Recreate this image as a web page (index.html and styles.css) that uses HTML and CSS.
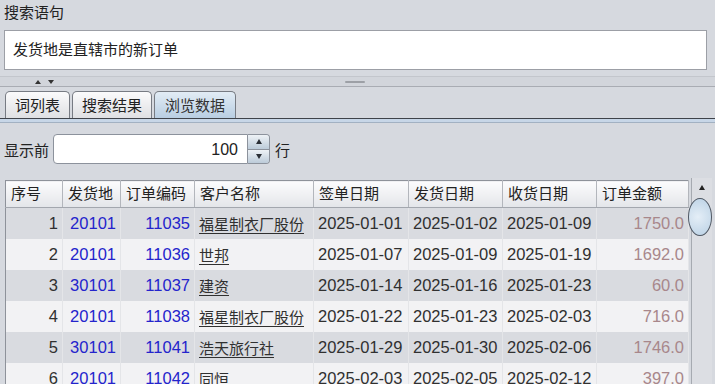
FILE: index.html
```html
<!DOCTYPE html>
<html lang="zh-CN">

<head>
    <meta charset="UTF-8">
    <meta name="viewport" content="width=device-width, initial-scale=1.0">
    <title>搜索</title>
    <link rel="stylesheet" href="styles.css">
</head>

<body>
    <div class="query-label">搜索语句</div>
    <div class="query-box">发货地是直辖市的新订单</div>

    <div class="splitter">
        <div class="splitter-bar">
            <span class="arrow-up"></span>
            <span class="arrow-down"></span>
            <span class="grip"></span>
        </div>
    </div>

    <div class="tabs">
        <div class="tab">词列表</div>
        <div class="tab">搜索结果</div>
        <div class="tab active">浏览数据</div>
    </div>
    <div class="tab-rule"></div>

    <div class="browse">
        <div class="limit-row">
            <span class="limit-label">显示前</span>
            <div class="spinner">
                <div class="spinner-field">100</div>
                <div class="spinner-btns">
                    <div class="spin-btn"><span class="tri-up"></span></div>
                    <div class="spin-btn"><span class="tri-down"></span></div>
                </div>
            </div>
            <span class="limit-label">行</span>
        </div>

        <div class="grid">
            <table class="data">
                <colgroup>
                    <col style="width:57px">
                    <col style="width:58px">
                    <col style="width:74px">
                    <col style="width:119px">
                    <col style="width:95px">
                    <col style="width:94px">
                    <col style="width:94px">
                    <col style="width:92px">
                </colgroup>
                <thead>
                    <tr>
                        <th>序号</th>
                        <th>发货地</th>
                        <th>订单编码</th>
                        <th>客户名称</th>
                        <th>签单日期</th>
                        <th>发货日期</th>
                        <th>收货日期</th>
                        <th>订单金额</th>
                    </tr>
                </thead>
                <tbody>
                    <tr>
                        <td class="num">1</td><td class="num link">20101</td><td class="num link">11035</td>
                        <td class="name"><u>福星制衣厂股份</u></td>
                        <td>2025-01-01</td><td>2025-01-02</td><td>2025-01-09</td><td class="num money">1750.0</td>
                    </tr>
                    <tr>
                        <td class="num">2</td><td class="num link">20101</td><td class="num link">11036</td>
                        <td class="name"><u>世邦</u></td>
                        <td>2025-01-07</td><td>2025-01-09</td><td>2025-01-19</td><td class="num money">1692.0</td>
                    </tr>
                    <tr>
                        <td class="num">3</td><td class="num link">30101</td><td class="num link">11037</td>
                        <td class="name"><u>建资</u></td>
                        <td>2025-01-14</td><td>2025-01-16</td><td>2025-01-23</td><td class="num money">60.0</td>
                    </tr>
                    <tr>
                        <td class="num">4</td><td class="num link">20101</td><td class="num link">11038</td>
                        <td class="name"><u>福星制衣厂股份</u></td>
                        <td>2025-01-22</td><td>2025-01-23</td><td>2025-02-03</td><td class="num money">716.0</td>
                    </tr>
                    <tr>
                        <td class="num">5</td><td class="num link">30101</td><td class="num link">11041</td>
                        <td class="name"><u>浩天旅行社</u></td>
                        <td>2025-01-29</td><td>2025-01-30</td><td>2025-02-06</td><td class="num money">1746.0</td>
                    </tr>
                    <tr>
                        <td class="num">6</td><td class="num link">20101</td><td class="num link">11042</td>
                        <td class="name"><u>同恒</u></td>
                        <td>2025-02-03</td><td>2025-02-05</td><td>2025-02-12</td><td class="num money">397.0</td>
                    </tr>
                </tbody>
            </table>

            <div class="vscroll">
                <div class="vscroll-up"><span class="tri-up dark"></span></div>
                <div class="vscroll-thumb"></div>
            </div>
        </div>
    </div>
</body>

</html>
```

FILE: styles.css
```css
html,
body {
    margin: 0;
    overflow: hidden;
    height: 100%;
    width: 100%;
}

body {
    background-color: #d6d9df;
    font-family: "Liberation Sans", "Noto Sans CJK SC", sans-serif;
    font-size: 15px;
    color: #222;
}

.query-label {
    height: 26px;
    line-height: 26px;
    padding-left: 4px;
    font-size: 15px;
}

.query-box {
    margin: 4px 8px 0 4px;
    height: 38px;
    line-height: 38px;
    padding-left: 8px;
    background-color: #fff;
    border: 1px solid #9c9fa6;
}

.splitter {
    height: 20px;
    padding-top: 6px;
    box-sizing: border-box;
}

.splitter-bar {
    position: relative;
    height: 9px;
    border-top: 1px solid #c3c6cc;
    border-bottom: 1px solid #a9acb3;
    background-color: #d2d5db;
}

.arrow-up,
.arrow-down {
    position: absolute;
    width: 0;
    height: 0;
    border: 3px solid transparent;
}

.arrow-up {
    left: 35px;
    top: 0;
    border-bottom: 4px solid #333;
}

.arrow-down {
    left: 48px;
    top: 3px;
    border-top: 4px solid #333;
}

.grip {
    position: absolute;
    left: 345px;
    top: 4px;
    width: 20px;
    height: 2px;
    border-radius: 1px;
    background-color: #9da0a6;
}

.tabs {
    display: flex;
    gap: 2px;
    padding-left: 5px;
    height: 28px;
    align-items: flex-end;
}

.tab {
    height: 26px;
    line-height: 27px;
    padding: 0 9px;
    border: 1px solid #777b83;
    border-bottom: none;
    border-radius: 5px 5px 0 0;
    background: linear-gradient(#fbfbfc, #dfe0e3);
}

.tab.active {
    padding: 0 10px;
    color: #333;
    background: linear-gradient(#e2ecf5, #b9cee2);
}

.tab-rule {
    height: 3px;
    border-top: 1px solid #3f434a;
    border-bottom: 1px solid #a2b1c2;
    background-color: #c7d6e7;
}

.browse {
    padding: 11px 0 0 4px;
}

.limit-row {
    display: flex;
    align-items: center;
    height: 30px;
}

.spinner {
    display: flex;
    margin: 0 5px 0 4px;
    height: 30px;
}

.spinner-field {
    width: 184px;
    height: 28px;
    line-height: 29px;
    padding-right: 9px;
    text-align: right;
    background-color: #fff;
    border: 1px solid #8c929c;
    border-radius: 4px 0 0 4px;
    font-size: 16px;
}

.spinner-btns {
    display: flex;
    flex-direction: column;
    width: 21px;
    border: 1px solid #8c929c;
    border-left: none;
    border-radius: 0 4px 4px 0;
    overflow: hidden;
}

.spin-btn {
    flex: 1;
    display: flex;
    align-items: center;
    justify-content: center;
    background: linear-gradient(#eef2f6, #bccbd9);
}

.spin-btn + .spin-btn {
    border-top: 1px solid #8c929c;
}

.tri-up,
.tri-down {
    width: 0;
    height: 0;
    border: 3px solid transparent;
}

.tri-up {
    border-bottom: 5px solid #2b2f36;
    border-top-width: 0;
}

.tri-down {
    border-top: 5px solid #2b2f36;
    border-bottom-width: 0;
}

.grid {
    display: flex;
    align-items: flex-start;
    margin-top: 16px;
    margin-left: 1px;
}

.data {
    table-layout: fixed;
    border-collapse: collapse;
    width: 684px;
    border-left: 1px solid #8e929a;
    border-right: 1px solid #8e929a;
}

.data th {
    height: 26px;
    padding: 0 5px;
    text-align: left;
    font-weight: normal;
    white-space: nowrap;
    border-top: 1px solid #8e929a;
    border-right: 1px solid #b3b6bc;
    border-bottom: 1px solid #a3a7ae;
    background: linear-gradient(#fcfcfd, #e3e5e9);
    line-height: 26px;
}

.data td {
    height: 31px;
    padding: 0 4px;
    white-space: nowrap;
    overflow: hidden;
    border-right: 1px solid #e4e5e8;
    font-size: 16.5px;
    color: #303030;
}

.data tbody tr:nth-child(odd) td {
    background-color: #d9dbe0;
}

.data tbody tr:nth-child(even) td {
    background-color: #f2f2f4;
}

.data td.num {
    text-align: right;
}

.data td.link {
    color: #2424cc;
}

.data td.money {
    color: #a8878b;
}

.data td.name {
    font-size: 15px;
}

.data td.name u {
    text-underline-offset: 3px;
}

.vscroll {
    width: 20px;
    height: 220px;
    margin-left: 2px;
    margin-top: -2px;
    border-left: 1px solid #a6aab1;
    background-color: #dcdee3;
    position: relative;
}

.vscroll-up {
    height: 18px;
    display: flex;
    align-items: center;
    justify-content: center;
}

.tri-up.dark {
    border-bottom-color: #222;
}

.vscroll-thumb {
    position: absolute;
    left: -4px;
    top: 20px;
    width: 22px;
    height: 36px;
    border-radius: 50%;
    border: 1px solid #4f5864;
    background: radial-gradient(circle at 40% 50%, #e4eef7, #b9d0e4);
}
```
